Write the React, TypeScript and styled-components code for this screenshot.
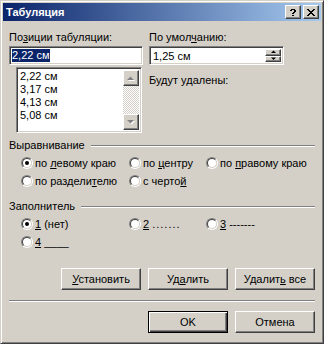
import styled, { createGlobalStyle } from "styled-components";

const GlobalStyle = createGlobalStyle`
  html, body { margin: 0; padding: 0; background: #d4d0c8; }
  body { font-family: "Liberation Sans", Arial, sans-serif; font-size: 11px; color: #000; }
`;

const Window = styled.div`
  box-sizing: border-box;
  width: 324px;
  height: 344px;
  background: #d4d0c8;
  border: 1px solid;
  border-color: #d4d0c8 #404040 #404040 #d4d0c8;
  box-shadow: inset 1px 1px #fff, inset -1px -1px #808080;
  padding: 2px;
  display: flex;
  flex-direction: column;
`;

const TitleBar = styled.div`
  height: 18px;
  display: flex;
  align-items: center;
  padding: 0 2px 0 3px;
  background: linear-gradient(to right, #0a246a, #a6caf0);
  color: #fff;
  font-weight: bold;
  font-size: 11px;
`;

const TitleText = styled.span`
  flex: 1;
`;

const TitleButtons = styled.div`
  display: flex;
  gap: 2px;
`;

const raised = `
  box-sizing: border-box;
  background: #d4d0c8;
  border: 1px solid;
  border-color: #fff #404040 #404040 #fff;
  box-shadow: inset -1px -1px #808080;
`;

const CaptionButton = styled.div`
  ${raised}
  width: 16px;
  height: 14px;
  display: flex;
  align-items: center;
  justify-content: center;
`;

const Body = styled.div`
  display: flex;
  flex-direction: column;
  padding: 0 6px;
`;

const Top = styled.div`
  display: grid;
  grid-template-columns: 134px 135px;
  column-gap: 6px;
  margin-top: 10px;
`;

const Column = styled.div`
  display: flex;
  flex-direction: column;
`;

const Label = styled.div<{ $gap?: number }>`
  line-height: 13px;
  height: 13px;
  white-space: nowrap;
  margin-top: ${(p) => p.$gap ?? 0}px;
`;

const Key = styled.span`
  text-decoration: underline;
`;

const Leader = styled.span`
  letter-spacing: 1px;
`;

const sunken = `
  box-sizing: border-box;
  background: #fff;
  border: 1px solid;
  border-color: #808080 #fff #fff #808080;
  box-shadow: inset 1px 1px #404040, inset -1px -1px #d4d0c8;
`;

const Field = styled.div`
  ${sunken}
  margin-top: 2px;
  height: 19px;
  display: flex;
  align-items: center;
  padding: 0 2px;
  white-space: nowrap;
`;

const Selected = styled.span`
  background: #0a246a;
  color: #fff;
  line-height: 13px;
`;

const FieldText = styled.span`
  flex: 1;
  padding-left: 1px;
`;

const Spin = styled.div`
  display: flex;
  flex-direction: column;
  align-self: stretch;
  padding: 2px 0;
`;

const SpinButton = styled.div`
  ${raised}
  flex: 1;
  width: 16px;
  display: flex;
  align-items: center;
  justify-content: center;
`;

const List = styled.div`
  ${sunken}
  margin: 2px 0 0 7px;
  width: 126px;
  height: 66px;
  display: flex;
  padding: 2px;
`;

const Items = styled.div`
  flex: 1;
  padding-left: 1px;
`;

const Item = styled.div`
  line-height: 13px;
`;

const ScrollBar = styled.div`
  width: 16px;
  display: flex;
  flex-direction: column;
`;

const ScrollButton = styled.div`
  ${raised}
  width: 16px;
  height: 16px;
  display: flex;
  align-items: center;
  justify-content: center;
`;

const Track = styled.div`
  flex: 1;
  background-image: repeating-conic-gradient(#d4d0c8 0 25%, #fff 0 50%);
  background-size: 2px 2px;
`;

const Group = styled.div<{ $gap: number }>`
  margin-top: ${(p) => p.$gap}px;
  display: flex;
  flex-direction: column;
`;

const GroupHeader = styled.div`
  display: flex;
  align-items: center;
  line-height: 13px;
  height: 13px;
`;

const GroupLine = styled.div`
  flex: 1;
  margin-left: 6px;
  border-top: 1px solid #808080;
  border-bottom: 1px solid #fff;
`;

const RadioGrid = styled.div`
  display: grid;
  grid-template-columns: 108px 77px auto;
  grid-auto-rows: 18px;
  padding-left: 12px;
  margin-top: 2px;
`;

const RadioItem = styled.div`
  display: flex;
  align-items: center;
  gap: 2px;
  white-space: nowrap;
`;

const RadioRing = styled.span`
  box-sizing: border-box;
  width: 12px;
  height: 12px;
  border-radius: 50%;
  border: 1px solid;
  border-color: #808080 #fff #fff #808080;
  display: inline-flex;
  flex-shrink: 0;
`;

const RadioInner = styled.span<{ $checked?: boolean }>`
  box-sizing: border-box;
  width: 10px;
  height: 10px;
  border-radius: 50%;
  border: 1px solid;
  border-color: #404040 #d4d0c8 #d4d0c8 #404040;
  background: #fff;
  display: flex;
  align-items: center;
  justify-content: center;
  &::after {
    content: "";
    width: 4px;
    height: 4px;
    border-radius: 50%;
    background: ${(p) => (p.$checked ? "#000" : "transparent")};
  }
`;

const ButtonRow = styled.div<{ $gap: number }>`
  display: flex;
  justify-content: flex-end;
  gap: 7px;
  margin-top: ${(p) => p.$gap}px;
`;

const Button = styled.div<{ $default?: boolean }>`
  ${raised}
  width: 80px;
  height: 22px;
  display: flex;
  align-items: center;
  justify-content: center;
  white-space: nowrap;
  ${(p) =>
    p.$default &&
    `
    border-color: #000;
    box-shadow: inset 1px 1px #fff, inset -1px -1px #404040, inset -2px -2px #808080;
  `}
`;

const Separator = styled.div`
  margin-top: 10px;
  border-top: 1px solid #808080;
  border-bottom: 1px solid #fff;
`;

// tiny bitmap glyphs for the caption buttons
const Bitmap = ({ rows, color = "#000" }: { rows: string[]; color?: string }) => (
  <svg width={rows[0].length} height={rows.length} shapeRendering="crispEdges">
    {rows.flatMap((r, y) =>
      r.split("").map((c, x) => (c === "#" ? <rect key={`${x}-${y}`} x={x} y={y} width={1} height={1} fill={color} /> : null))
    )}
  </svg>
);

const HELP = [" #### ", "##  ##", "    ##", "   ## ", "  ##  ", "      ", "  ##  "];
const CLOSE = ["##    ##", " ##  ## ", "  ####  ", "   ##   ", "  ####  ", " ##  ## ", "##    ##"];

const Arrow = ({ up, disabled }: { up?: boolean; disabled?: boolean }) => {
  const pts = up ? "0,4 7,4 3.5,0.5" : "0,0 7,0 3.5,3.5";
  if (!disabled)
    return (
      <svg width="7" height="4">
        <polygon points={up ? "1,3 6,3 3.5,0.5" : "1,0.5 6,0.5 3.5,3"} fill="#000" />
      </svg>
    );
  return (
    <svg width="8" height="5">
      <polygon points={pts} fill="#fff" transform="translate(1,1)" />
      <polygon points={pts} fill="#808080" />
    </svg>
  );
};

const Radio = ({ checked, children }: { checked?: boolean; children: React.ReactNode }) => (
  <RadioItem>
    <RadioRing>
      <RadioInner $checked={checked} />
    </RadioRing>
    <span>{children}</span>
  </RadioItem>
);

export default function App() {
  return (
    <>
      <GlobalStyle />
      <Window>
        <TitleBar>
          <TitleText>Табуляция</TitleText>
          <TitleButtons>
            <CaptionButton>
              <Bitmap rows={HELP} />
            </CaptionButton>
            <CaptionButton>
              <Bitmap rows={CLOSE} />
            </CaptionButton>
          </TitleButtons>
        </TitleBar>
        <Body>
          <Top>
            <Column>
              <Label>
                По<Key>з</Key>иции табуляции:
              </Label>
              <Field>
                <Selected>2,22 см</Selected>
              </Field>
              <List>
                <Items>
                  {["2,22 см", "3,17 см", "4,13 см", "5,08 см"].map((t) => (
                    <Item key={t}>{t}</Item>
                  ))}
                </Items>
                <ScrollBar>
                  <ScrollButton>
                    <Arrow up disabled />
                  </ScrollButton>
                  <Track />
                  <ScrollButton>
                    <Arrow disabled />
                  </ScrollButton>
                </ScrollBar>
              </List>
            </Column>
            <Column>
              <Label>
                По умол<Key>ч</Key>анию:
              </Label>
              <Field>
                <FieldText>1,25 см</FieldText>
                <Spin>
                  <SpinButton>
                    <Arrow up />
                  </SpinButton>
                  <SpinButton>
                    <Arrow />
                  </SpinButton>
                </Spin>
              </Field>
              <Label $gap={9}>Будут удалены:</Label>
            </Column>
          </Top>

          <Group $gap={6}>
            <GroupHeader>
              Выравнивание
              <GroupLine />
            </GroupHeader>
            <RadioGrid>
              <Radio checked>
                по <Key>л</Key>евому краю
              </Radio>
              <Radio>
                по <Key>ц</Key>ентру
              </Radio>
              <Radio>
                по <Key>п</Key>равому краю
              </Radio>
              <Radio>
                по раздели<Key>т</Key>елю
              </Radio>
              <Radio>
                с черто<Key>й</Key>
              </Radio>
            </RadioGrid>
          </Group>

          <Group $gap={10}>
            <GroupHeader>
              Заполнитель
              <GroupLine />
            </GroupHeader>
            <RadioGrid>
              <Radio checked>
                <Key>1</Key> (нет)
              </Radio>
              <Radio>
                <Key>2</Key> <Leader>.......</Leader>
              </Radio>
              <Radio>
                <Key>3</Key> -------
              </Radio>
              <Radio>
                <Key>4</Key> ____
              </Radio>
            </RadioGrid>
          </Group>

          <ButtonRow $gap={17}>
            <Button>
              <span>
                <Key>У</Key>становить
              </span>
            </Button>
            <Button>
              <span>
                Уд<Key>а</Key>лить
              </span>
            </Button>
            <Button>
              <span>
                Удалит<Key>ь</Key> все
              </span>
            </Button>
          </ButtonRow>
          <Separator />
          <ButtonRow $gap={9}>
            <Button $default>OK</Button>
            <Button>Отмена</Button>
          </ButtonRow>
        </Body>
      </Window>
    </>
  );
}
